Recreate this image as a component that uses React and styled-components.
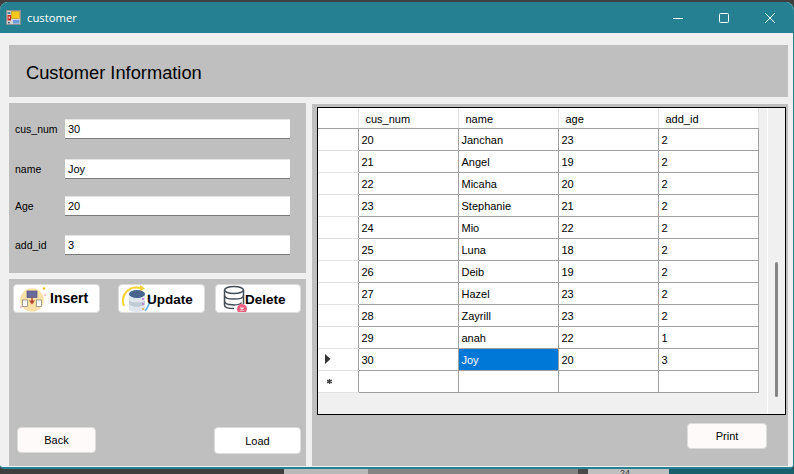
import styled, { createGlobalStyle } from "styled-components";

const GlobalStyle = createGlobalStyle`
  html, body {
    margin: 0;
    padding: 0;
    width: 794px;
    height: 474px;
    overflow: hidden;
    background: #3f3f3f;
    font-family: "Liberation Sans", Arial, sans-serif;
  }
`;

const Page = styled.div`
  width: 794px;
  height: 474px;
  display: flex;
  flex-direction: column;
  background: #3f3f3f;
  overflow: hidden;
`;

const Window = styled.div`
  margin-top: 2px;
  width: 793px;
  height: 465px;
  flex: none;
  display: flex;
  flex-direction: column;
  background: #f0f0f0;
  border-radius: 8px 8px 4px 4px;
  border-bottom: 2px solid #258191;
  border-right: 1px solid #258191;
  box-sizing: content-box;
  overflow: hidden;
`;

const TitleBar = styled.div`
  height: 31px;
  flex: none;
  display: flex;
  align-items: center;
  background: #258191;
  color: #fff;
  padding-left: 6px;
`;

const TitleText = styled.span`
  margin-left: 6px;
  margin-top: -1px;
  flex: 1;
  font-family: "Open Sans", "Liberation Sans", sans-serif;
  font-size: 11.3px;
`;

const WinButton = styled.div`
  width: 46px;
  height: 31px;
  display: flex;
  align-items: center;
  justify-content: center;
`;

const Client = styled.div`
  flex: 1;
  display: flex;
  flex-direction: column;
  gap: 6px;
  padding: 12px 5px 1px 9px;
  min-height: 0;
`;

const Header = styled.div`
  height: 52px;
  flex: none;
  box-sizing: border-box;
  display: flex;
  align-items: center;
  background: #bfbfbf;
  padding: 4px 0 0 17px;
  font-size: 18.3px;
  color: #000;
`;

const Body = styled.div`
  flex: 1;
  display: flex;
  gap: 6px;
  min-height: 0;
`;

const LeftColumn = styled.div`
  width: 297px;
  display: flex;
  flex-direction: column;
  gap: 6px;
`;

const FormPanel = styled.div`
  height: 170px;
  flex: none;
  box-sizing: border-box;
  background: #bfbfbf;
  padding-top: 16px;
`;

const FormRow = styled.div`
  height: 20px;
  display: flex;
  align-items: center;
  margin-top: ${(p) => p.$top || 0}px;
  padding-left: 6px;
`;

const Label = styled.label`
  width: 50px;
  font-size: 10.5px;
  color: #000;
`;

const Field = styled.div`
  width: 225px;
  height: 20px;
  box-sizing: border-box;
  background: #fff;
  border-bottom: 1px solid #7a7a7a;
  border-top: 1px solid #e4e4e4;
  padding: 0 3px;
  font-size: 11px;
  line-height: 18px;
  color: #000;
`;

const ActionPanel = styled.div`
  flex: 1;
  display: flex;
  flex-direction: column;
  justify-content: space-between;
  background: #bfbfbf;
`;

const ActionRow = styled.div`
  display: flex;
  padding: 5px 0 0 4px;
`;

const ActionButton = styled.div`
  position: relative;
  width: ${(p) => p.$width}px;
  height: 29px;
  margin-left: ${(p) => p.$left || 0}px;
  box-sizing: border-box;
  display: flex;
  align-items: center;
  background: #fff;
  border: 1px solid #dcdcdc;
  border-radius: 4px;
  overflow: hidden;
  font-weight: bold;
  font-size: ${(p) => p.$size || 13.5}px;
  color: #000;
`;

const ActionIcon = styled.svg`
  flex: none;
  margin-left: ${(p) => p.$left || 0}px;
`;

const ActionLabel = styled.span`
  margin-left: ${(p) => p.$left || 0}px;
  margin-top: ${(p) => p.$top || 0}px;
`;

const FootRow = styled.div`
  display: flex;
  justify-content: space-between;
  align-items: flex-start;
  padding: 0 5px 12px 8px;
`;

const PlainButton = styled.div`
  width: ${(p) => p.$width}px;
  height: ${(p) => p.$height || 26}px;
  box-sizing: border-box;
  display: flex;
  align-items: center;
  justify-content: center;
  background: ${(p) => p.$bg || "#fffafa"};
  border: 1px solid #dcdcdc;
  border-radius: 4px;
  font-size: 11px;
  color: #000;
`;

const GridPanel = styled.div`
  flex: 1;
  margin-top: 1px;
  display: flex;
  flex-direction: column;
  background: #bfbfbf;
  padding: 3px 0 0 5px;
`;

const GridFrame = styled.div`
  position: relative;
  width: 469px;
  height: 308px;
  box-sizing: border-box;
  border: 1px solid #000;
  background: #f0f0f0;
  overflow: hidden;
`;

const Table = styled.table`
  border-collapse: collapse;
  table-layout: fixed;
  width: 440px;
  font-size: 11px;
  color: #000;
`;

const HeadCell = styled.th`
  height: 20px;
  padding: 3px 0 0 ${(p) => (p.$corner ? 0 : 7)}px;
  box-sizing: border-box;
  text-align: left;
  font-weight: normal;
  background: #fff;
  border-right: 1px solid #e2e2e2;
  border-bottom: 1px solid #a0a0a0;
`;

const RowHead = styled.td`
  height: 21px;
  padding: 0 0 0 ${(p) => p.$pad || 7}px;
  background: #fff;
  border-right: 1px solid #a0a0a0;
  border-bottom: 1px solid #e2e2e2;
  vertical-align: middle;
  line-height: 0;
`;

const Cell = styled.td`
  height: 19px;
  padding: 2px 0 0 3px;
  background: ${(p) => (p.$selected ? "#0078d7" : "#fff")};
  color: ${(p) => (p.$selected ? "#fff" : "#000")};
  border-right: 1px solid #a0a0a0;
  border-bottom: 1px solid #a0a0a0;
`;

const ScrollTrack = styled.div`
  position: absolute;
  top: 0;
  right: 0;
  bottom: 0;
  width: 17px;
  background: #f0f0f0;
  border-left: 1px solid #fff;
`;

const ScrollThumb = styled.div`
  position: absolute;
  top: 154px;
  left: 7px;
  width: 3px;
  height: 135px;
  border-radius: 2px;
  background: #858585;
`;

const PrintRow = styled.div`
  display: flex;
  justify-content: flex-end;
  padding: 8px 21px 0 0;
`;

/* what shows of the desktop under the window */
const DesktopStrip = styled.div`
  flex: 1;
  display: flex;
  overflow: hidden;
`;

const StripPart = styled.div`
  width: ${(p) => p.$width}px;
  flex: ${(p) => (p.$width ? "none" : 1)};
  background: ${(p) => p.$bg};
  font-size: 9px;
  line-height: 9px;
  color: #333;
  padding-left: ${(p) => p.$pad || 0}px;
  box-sizing: border-box;
`;

const FIELDS = [
  { label: "cus_num", value: "30", top: 0 },
  { label: "name", value: "Joy", top: 20 },
  { label: "Age", value: "20", top: 17 },
  { label: "add_id", value: "3", top: 19 },
];

const COLUMNS = ["cus_num", "name", "age", "add_id"];

const ROWS = [
  ["20", "Janchan", "23", "2"],
  ["21", "Angel", "19", "2"],
  ["22", "Micaha", "20", "2"],
  ["23", "Stephanie", "21", "2"],
  ["24", "Mio", "22", "2"],
  ["25", "Luna", "18", "2"],
  ["26", "Deib", "19", "2"],
  ["27", "Hazel", "23", "2"],
  ["28", "Zayrill", "23", "2"],
  ["29", "anah", "22", "1"],
  ["30", "Joy", "20", "3"],
];

const FormIcon = () => (
  <svg width="15" height="15" viewBox="0 0 15 15">
    <rect x="0.500" y="0.500" width="14" height="14" fill="#d4d4d4" stroke="#8f8f8f" />
    <rect x="1.500" y="5" width="3.500" height="5.500" fill="#c8241c" />
    <rect x="2.500" y="6.500" width="1.500" height="2" fill="#f4d0c0" />
    <rect x="5.500" y="1.500" width="8" height="7" fill="#fbc818" stroke="#b08a10" strokeWidth="0.500" />
    <rect x="7" y="10" width="6.500" height="3.500" fill="#6c9ce0" />
    <rect x="2" y="12" width="2" height="1.500" fill="#4a6a80" />
    <rect x="1.500" y="2" width="3" height="2" fill="#4a8aa0" />
  </svg>
);

const InsertIcon = () => (
  <ActionIcon $left={5} width="28" height="27" viewBox="0 0 28 27">
    <circle cx="13" cy="15" r="11.800" fill="#fbe0a8" />
    <rect x="8" y="6" width="10" height="6.500" fill="#6a6a9a" stroke="#4f4f7c" strokeWidth="0.700" />
    <path d="M13 12.500v4" stroke="#b8402c" strokeWidth="1.400" />
    <path d="M10 15.500l3 4 3-4z" fill="#b8402c" />
    <rect x="3.500" y="15" width="5" height="6.500" fill="#fff" stroke="#7a7a7a" strokeWidth="0.700" />
    <rect x="17.500" y="15" width="5" height="6.500" fill="#fff" stroke="#7a7a7a" strokeWidth="0.700" />
    <circle cx="25" cy="3.500" r="1.300" fill="#f0c030" />
    <circle cx="26" cy="10" r="0.800" fill="#ee7a8a" />
    <circle cx="2" cy="22" r="0.800" fill="#ee7a8a" />
  </ActionIcon>
);

const UpdateIcon = () => (
  <ActionIcon $left={1} width="31" height="27" viewBox="0 0 31 27">
    <path d="M4 21C0 11 8 0 21 3" fill="none" stroke="#f7d237" strokeWidth="2" />
    <path d="M20 0l5 3.500-5 3z" fill="#f7d237" />
    <path d="M29 9c2 6 0 12-4 17" fill="none" stroke="#62b5ea" strokeWidth="1.800" />
    <path d="M9 9h16v5c0 4-16 4-16 0z" fill="#dfe5ec" />
    <path d="M9 15c2 3 14 3 16 0v4c0 4-16 4-16 0z" fill="#c2ccd8" />
    <path d="M9 20c2 3 14 3 16 0v4c0 4-16 4-16 0z" fill="#dfe5ec" />
    <ellipse cx="17" cy="9" rx="8" ry="4" fill="#46648e" />
    <circle cx="23" cy="14" r="1" fill="#c06ad8" />
    <circle cx="23" cy="19" r="1" fill="#c06ad8" />
    <circle cx="23" cy="24" r="1" fill="#e0b040" />
  </ActionIcon>
);

const DeleteIcon = () => (
  <ActionIcon $left={7} width="26" height="27" viewBox="0 0 26 27">
    <g fill="none" stroke="#444c56" strokeWidth="1.500">
      <ellipse cx="11" cy="5" rx="9.500" ry="3.600" />
      <path d="M1.500 5v15c0 2.400 4.200 3.600 9.500 3.600" />
      <path d="M20.500 5v14" />
      <path d="M1.500 10.500c0 4.800 19 4.800 19 0" />
      <path d="M1.500 16c0 4.800 15 5 17 1.500" />
    </g>
    <circle cx="19" cy="24" r="5" fill="#f2607e" />
    <path d="M17.500 22.500l3 3m0-3l-3 3" stroke="#fff" strokeWidth="1.200" />
  </ActionIcon>
);

export default function App() {
  return (
    <>
      <GlobalStyle />
      <Page>
        <Window>
          <TitleBar>
            <FormIcon />
            <TitleText>customer</TitleText>
            <WinButton>
              <svg width="10" height="10" viewBox="0 0 10 10">
                <path d="M0 5.500h10" stroke="#fff" />
              </svg>
            </WinButton>
            <WinButton>
              <svg width="10" height="10" viewBox="0 0 10 10">
                <rect x="0.500" y="0.500" width="9" height="9" rx="1" fill="none" stroke="#fff" />
              </svg>
            </WinButton>
            <WinButton>
              <svg width="10" height="10" viewBox="0 0 10 10">
                <path d="M0 0l10 10M10 0L0 10" stroke="#fff" />
              </svg>
            </WinButton>
          </TitleBar>
          <Client>
            <Header>Customer Information</Header>
            <Body>
              <LeftColumn>
                <FormPanel>
                  {FIELDS.map((f) => (
                    <FormRow key={f.label} $top={f.top}>
                      <Label>{f.label}</Label>
                      <Field>{f.value}</Field>
                    </FormRow>
                  ))}
                </FormPanel>
                <ActionPanel>
                  <ActionRow>
                    <ActionButton $width={87} $size={14}>
                      <InsertIcon />
                      <ActionLabel $left={3} $top={-2}>Insert</ActionLabel>
                    </ActionButton>
                    <ActionButton $width={87} $left={18}>
                      <UpdateIcon />
                      <ActionLabel $left={-4} $top={2}>Update</ActionLabel>
                    </ActionButton>
                    <ActionButton $width={86} $left={10}>
                      <DeleteIcon />
                      <ActionLabel $left={-4} $top={2}>Delete</ActionLabel>
                    </ActionButton>
                  </ActionRow>
                  <FootRow>
                    <PlainButton $width={79}>Back</PlainButton>
                    <PlainButton $width={87} $height={27} $bg="#fff">Load</PlainButton>
                  </FootRow>
                </ActionPanel>
              </LeftColumn>
              <GridPanel>
                <GridFrame>
                  <Table>
                    <colgroup>
                      <col width="40" />
                      <col width="100" />
                      <col width="100" />
                      <col width="100" />
                      <col width="100" />
                    </colgroup>
                    <thead>
                      <tr>
                        <HeadCell $corner />
                        {COLUMNS.map((c) => (
                          <HeadCell key={c}>{c}</HeadCell>
                        ))}
                      </tr>
                    </thead>
                    <tbody>
                      {ROWS.map((row) => {
                        const current = row[0] === "30";
                        return (
                          <tr key={row[0]}>
                            <RowHead>
                              {current && (
                                <svg width="6" height="10" viewBox="0 0 6 10">
                                  <path d="M0 0l5.500 5-5.500 5z" fill="#333" />
                                </svg>
                              )}
                            </RowHead>
                            {row.map((v, i) => (
                              <Cell key={i} $selected={current && i === 1}>{v}</Cell>
                            ))}
                          </tr>
                        );
                      })}
                      <tr>
                        <RowHead $pad={9}>
                          <svg width="5" height="5" viewBox="0 0 5 5">
                            <path d="M2.500 0v5M0 1.200l5 2.600M5 1.200L0 3.800" stroke="#444" strokeWidth="1.300" />
                          </svg>
                        </RowHead>
                        {COLUMNS.map((c) => (
                          <Cell key={c} />
                        ))}
                      </tr>
                    </tbody>
                  </Table>
                  <ScrollTrack>
                    <ScrollThumb />
                  </ScrollTrack>
                </GridFrame>
                <PrintRow>
                  <PlainButton $width={80}>Print</PlainButton>
                </PrintRow>
              </GridPanel>
            </Body>
          </Client>
        </Window>
        <DesktopStrip>
          <StripPart $width={284} $bg="#3f3f3f" />
          <StripPart $width={84} $bg="#b9b9b9" />
          <StripPart $width={210} $bg="#858585" />
          <StripPart $width={10} $bg="#4a4a4a" />
          <StripPart $width={81} $bg="#c0c0c0" $pad={32}>24</StripPart>
          <StripPart $bg="#1a5f6c" />
        </DesktopStrip>
      </Page>
    </>
  );
}
